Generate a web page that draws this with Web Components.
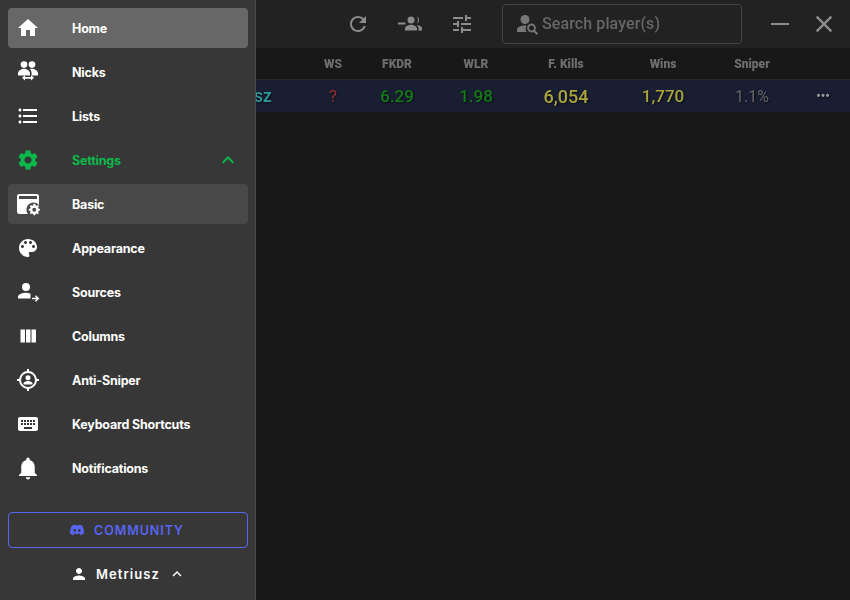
<!DOCTYPE html>
<html>
<head>
<meta charset="utf-8">
<style>
  html, body { margin: 0; height: 100%; background: #181818; overflow: hidden; }
</style>
</head>
<body>
<app-shell>
  <player-view slot="view"></player-view>
  <side-drawer slot="drawer"></side-drawer>
</app-shell>

<script>
const PATHS = {
  home: `<path d="M10 20v-6h4v6h5v-8h3L12 3 2 12h3v8z"/>`,
  nicks: `<circle cx="8" cy="4.600" r="3.300"/><circle cx="16" cy="4.600" r="3.300"/><path d="M2 15.400v-2c0-2.600 3.600-4.600 6-4.600s6 2 6 4.600v2zM15.600 15.400v-2.200c0-1.700-.7-3-1.900-4.100.7-.2 1.600-.3 2.300-.3 2.400 0 6 1.900 6 4.400v2.200z"/><path d="M9 19v-2l-3 3 3 3v-2h6v2l3-3-3-3v2z" transform="translate(0 -.2) scale(1 .9)"/>`,
  list: `<path d="M4 10.500c-.83 0-1.500.67-1.500 1.500s.67 1.500 1.500 1.500 1.500-.67 1.500-1.500-.67-1.500-1.500-1.500zm0-6c-.83 0-1.500.67-1.500 1.500S3.170 7.500 4 7.500 5.500 6.830 5.500 6 4.830 4.500 4 4.500zm0 12c-.83 0-1.500.68-1.500 1.500s.68 1.500 1.500 1.500 1.500-.68 1.500-1.500-.67-1.500-1.500-1.500zM7 19h14v-2H7v2zm0-6h14v-2H7v2zm0-8v2h14V5H7z"/>`,
  settings: `<path d="M19.140 12.940c.04-.3.06-.61.06-.94 0-.32-.02-.64-.07-.94l2.030-1.580c.18-.14.23-.41.12-.61l-1.920-3.320c-.12-.22-.37-.29-.59-.22l-2.390.96c-.5-.38-1.030-.7-1.620-.94l-.36-2.540c-.04-.24-.24-.41-.48-.41h-3.840c-.24 0-.43.17-.47.41l-.36 2.540c-.59.24-1.130.57-1.620.94l-2.390-.96c-.22-.08-.47 0-.59.22L2.740 8.870c-.12.21-.08.47.12.61l2.030 1.580c-.05.3-.09.63-.09.94s.02.64.07.94l-2.030 1.580c-.18.14-.23.41-.12.61l1.920 3.320c.12.22.37.29.59.22l2.390-.96c.5.38 1.030.7 1.620.94l.36 2.540c.05.24.24.41.48.41h3.840c.24 0 .44-.17.47-.41l.36-2.540c.59-.24 1.130-.56 1.620-.94l2.390.96c.22.08.47 0 .59-.22l1.920-3.320c.12-.22.07-.47-.12-.61l-2.010-1.580zM12 15.600c-1.980 0-3.600-1.620-3.600-3.600s1.620-3.600 3.600-3.600 3.600 1.620 3.600 3.600-1.620 3.600-3.600 3.600z"/>`,
  basic: `<path fill-rule="evenodd" d="M3.200 2h17.600A2.200 2.200 0 0 1 23 4.200V13a7 7 0 0 0-11 9H3.200A2.200 2.200 0 0 1 1 19.800V4.200A2.200 2.200 0 0 1 3.200 2zM3 4v3h18V4z"/><path fill-rule="evenodd" d="M18 13.500l1 .1.4 1.500 1 .5 1.400-.7 1 1.100-.8 1.300.3 1 1.500.5v1.500l-1.500.5-.3 1-.1 0 .8 1.300-1 1-1.400-.7-1 .5-.4 1.300h-1.600l-.4-1.300-1-.5-1.400.7-1-1 .8-1.300-.4-1-1.500-.5v-1.500l1.500-.5.4-1 -.8-1.300 1-1.100 1.400.7 1-.5.4-1.500zM18 17.700a2 2 0 1 0 0 4 2 2 0 0 0 0-4z" transform="translate(.6 -1.500) scale(.98)"/>`,
  palette: `<path d="M12 3c-4.970 0-9 4.030-9 9s4.030 9 9 9c.83 0 1.500-.67 1.500-1.500 0-.39-.15-.74-.39-1.010-.23-.26-.38-.61-.38-.99 0-.83.67-1.500 1.500-1.500H16c2.760 0 5-2.240 5-5 0-4.420-4.030-8-9-8zm-5.500 9c-.83 0-1.500-.67-1.500-1.500S5.670 9 6.500 9 8 9.670 8 10.500 7.330 12 6.500 12zm3-4C8.670 8 8 7.330 8 6.500S8.670 5 9.500 5s1.500.67 1.500 1.500S10.330 8 9.500 8zm5 0c-.83 0-1.500-.67-1.500-1.500S13.670 5 14.500 5s1.500.67 1.500 1.500S15.330 8 14.500 8zm3 4c-.83 0-1.500-.67-1.500-1.500S16.670 9 17.500 9s1.500.67 1.500 1.500-.67 1.500-1.500 1.500z"/>`,
  sources: `<circle cx="10" cy="7" r="4"/><path d="M2 18.500v-1.700c0-2.700 5.300-4 8-4 1.300 0 3 .3 4.500.9v4.800z"/><path d="M16 19.200h4.600l-1.700-1.700 1-1 3.500 3.500-3.500 3.500-1-1 1.700-1.700H16z" transform="translate(0 -.5) scale(1 .95)"/>`,
  columns: `<path d="M10 18.500h4.500V5.500H10zm-5.500 0H9V5.500H4.500zM15.500 5.500v13H20v-13z"/>`,
  sniper: `<path fill-rule="evenodd" d="M13 1v2.070A9 9 0 0 1 20.930 11H23v2h-2.070A9 9 0 0 1 13 20.930V23h-2v-2.070A9 9 0 0 1 3.070 13H1v-2h2.070A9 9 0 0 1 11 3.070V1zM12 5a7 7 0 1 0 0 14 7 7 0 0 0 0-14z"/><circle cx="12" cy="9.800" r="2.500"/><path d="M7.500 16.500v-.9c0-1.900 3-2.700 4.500-2.700s4.500.8 4.500 2.700v.9z"/>`,
  keyboard: `<path d="M20 5H4c-1.100 0-1.990.9-1.990 2L2 17c0 1.100.9 2 2 2h16c1.100 0 2-.9 2-2V7c0-1.100-.9-2-2-2zm-9 3h2v2h-2V8zm0 3h2v2h-2v-2zM8 8h2v2H8V8zm0 3h2v2H8v-2zm-1 2H5v-2h2v2zm0-3H5V8h2v2zm9 7H8v-2h8v2zm0-4h-2v-2h2v2zm0-3h-2V8h2v2zm3 3h-2v-2h2v2zm0-3h-2V8h2v2z"/>`,
  bell: `<path transform="translate(-1.500 -1.300) scale(1.125)" d="M12 22c1.100 0 2-.9 2-2h-4c0 1.100.89 2 2 2zm6-6v-5c0-3.070-1.640-5.640-4.500-6.320V4c0-.83-.67-1.500-1.500-1.500s-1.500.67-1.500 1.500v.68C7.630 5.360 6 7.920 6 11v5l-2 2v1h16v-1l-2-2z"/>`,
  less: `<path d="M12 8l-6 6 1.410 1.410L12 10.830l4.590 4.580L18 14z"/>`,
  person: `<path d="M12 12c2.210 0 4-1.790 4-4s-1.790-4-4-4-4 1.790-4 4 1.790 4 4 4zm0 2c-2.670 0-8 1.340-8 4v2h16v-2c0-2.660-5.330-4-8-4z"/>`,
  discord: `<path d="M20.317 4.370a19.791 19.791 0 0 0-4.885-1.515.074.074 0 0 0-.079.037c-.21.375-.444.864-.608 1.250a18.270 18.270 0 0 0-5.487 0 12.640 12.640 0 0 0-.617-1.250.077.077 0 0 0-.079-.037A19.736 19.736 0 0 0 3.677 4.370a.07.07 0 0 0-.032.027C.533 9.046-.32 13.580.099 18.057a.082.082 0 0 0 .031.057 19.900 19.900 0 0 0 5.993 3.030.078.078 0 0 0 .084-.028 14.090 14.090 0 0 0 1.226-1.994.076.076 0 0 0-.041-.106 13.107 13.107 0 0 1-1.872-.892.077.077 0 0 1-.008-.128 10.200 10.200 0 0 0 .372-.292.074.074 0 0 1 .077-.01c3.928 1.793 8.180 1.793 12.062 0a.074.074 0 0 1 .078.01c.12.098.246.198.373.292a.077.077 0 0 1-.006.127 12.299 12.299 0 0 1-1.873.892.077.077 0 0 0-.041.107c.36.698.772 1.362 1.225 1.993a.076.076 0 0 0 .084.028 19.839 19.839 0 0 0 6.002-3.030.077.077 0 0 0 .032-.054c.5-5.177-.838-9.674-3.549-13.660a.061.061 0 0 0-.031-.03zM8.020 15.330c-1.183 0-2.157-1.085-2.157-2.419 0-1.333.956-2.419 2.157-2.419 1.210 0 2.176 1.096 2.157 2.420 0 1.333-.956 2.418-2.157 2.418zm7.975 0c-1.183 0-2.157-1.085-2.157-2.419 0-1.333.955-2.419 2.157-2.419 1.210 0 2.176 1.096 2.157 2.420 0 1.333-.946 2.418-2.157 2.418z"/>`,
  refresh: `<path d="M17.650 6.350C16.200 4.900 14.210 4 12 4c-4.420 0-7.990 3.580-7.990 8s3.570 8 7.990 8c3.730 0 6.840-2.550 7.730-6h-2.080c-.82 2.330-3.040 4-5.650 4-3.310 0-6-2.690-6-6s2.690-6 6-6c1.660 0 3.140.69 4.220 1.780L13 11h7V4l-2.350 2.350z"/>`,
  groupRemove: `<path d="M0 10.500h7.500v2H0z"/><circle cx="13" cy="8" r="3.500"/><path d="M18.500 4.600a3.500 3.500 0 0 1 0 6.800 5 5 0 0 0 0-6.800z"/><path d="M7 18.500v-2c0-2.400 3.800-3.800 6-3.800s6 1.400 6 3.800v2zM20.500 18.500v-2.300c0-1.300-.6-2.500-1.800-3.300 2.200.2 5.300 1.400 5.300 3.400v2.200z"/>`,
  tune: `<path d="M3 17v2h6v-2H3zM3 5v2h10V5H3zm10 16v-2h8v-2h-8v-2h-2v6h2zM7 9v2H3v2h4v2h2V9H7zm14 4v-2H11v2h10zm-6-4h2V7h4V5h-4V3h-2v6z"/>`,
  searchPlayer: `<circle cx="10" cy="7.500" r="4.500"/><path d="M2 20v-2.200c0-3 5-4.300 8-4.300.6 0 1.200 0 1.800.1A6 6 0 0 0 11.500 20z"/><path fill-rule="evenodd" d="M16.500 11.500a4.500 4.500 0 0 1 3.700 7l3 3-1.500 1.500-3-3a4.500 4.500 0 1 1-2.200-8.500zm0 2a2.500 2.500 0 1 0 0 5 2.500 2.500 0 0 0 0-5z"/>`,
  minimize: `<path d="M3 11h18v2H3z"/>`,
  close: `<path d="M19 6.410 17.590 5 12 10.590 6.410 5 5 6.410 10.590 12 5 17.590 6.410 19 12 13.410 17.590 19 19 17.590 13.410 12z"/>`
};

class UiIcon extends HTMLElement {
  connectedCallback() {
    const size = this.getAttribute("size") || 24;
    this.attachShadow({ mode: "open" }).innerHTML = `
      <style>
        :host { display: block; width: ${size}px; height: ${size}px; flex: none; }
        svg { display: block; width: 100%; height: 100%; fill: currentColor; overflow: visible; }
      </style>
      <svg viewBox="0 0 24 24">${PATHS[this.getAttribute("name")] || ""}</svg>
    `;
  }
}
customElements.define("ui-icon", UiIcon);

class AppShell extends HTMLElement {
  constructor() {
    super();
    this.attachShadow({ mode: "open" }).innerHTML = `
      <style>
        :host { display: block; position: relative; width: 850px; height: 600px; overflow: hidden; }
        .drawer { position: absolute; left: 0; top: 0; bottom: 0; }
      </style>
      <slot name="view"></slot>
      <div class="drawer"><slot name="drawer"></slot></div>
    `;
  }
}
customElements.define("app-shell", AppShell);

class NavItem extends HTMLElement {
  connectedCallback() {
    const active = this.hasAttribute("expanded");
    this.attachShadow({ mode: "open" }).innerHTML = `
      <style>
        :host { display: flex; align-items: center; height: 40px; padding: 0 8px; gap: 32px; border-radius: 4px; color: #fff; }
        :host([tone="selected"]) { background: #676767; }
        :host([tone="sub"]) { background: #484848; }
        :host([tone="green"]) { color: #0bb84a; }
        .label { flex: 1; padding-top: 2px; font: 650 12.5px/1 Inter, "Liberation Sans", sans-serif; letter-spacing: -.2px; }
      </style>
      <ui-icon name="${this.getAttribute("icon")}"></ui-icon>
      <span class="label">${this.getAttribute("label")}</span>
      ${active ? `<ui-icon name="less"></ui-icon>` : ""}
    `;
  }
}
customElements.define("nav-item", NavItem);

class SideDrawer extends HTMLElement {
  constructor() {
    super();
    const items = [
      ["home", "Home", "selected"],
      ["nicks", "Nicks"],
      ["list", "Lists"],
      ["settings", "Settings", "green", true],
      ["basic", "Basic", "sub"],
      ["palette", "Appearance"],
      ["sources", "Sources"],
      ["columns", "Columns"],
      ["sniper", "Anti-Sniper"],
      ["keyboard", "Keyboard Shortcuts"],
      ["bell", "Notifications"]
    ];
    this.attachShadow({ mode: "open" }).innerHTML = `
      <style>
        :host { display: flex; flex-direction: column; box-sizing: border-box; width: 256px; height: 600px; padding: 8px 7px 0 8px; background: #373737; border-right: 1px solid #4a4a4a; }
        nav { display: flex; flex-direction: column; gap: 4px; flex: 1; }
        .community { box-sizing: border-box; height: 36px; padding-right: 2px; display: flex; align-items: center; justify-content: center; gap: 10px; border: 1px solid #5865f2; border-radius: 4px; color: #5865f2; font: 600 12.5px/1 Inter, "Liberation Sans", sans-serif; letter-spacing: .95px; }
        .community span { padding-top: 2px; }
        .user { height: 52px; display: flex; align-items: center; justify-content: center; color: #fff; font: 600 13px/1 Inter, "Liberation Sans", sans-serif; letter-spacing: 1.05px; }
        .user span { margin: 0 8px; }
      </style>
      <nav>
        ${items.map(([icon, label, tone, expanded]) => `
          <nav-item icon="${icon}" label="${label}" ${tone ? `tone="${tone}"` : ""} ${expanded ? "expanded" : ""}></nav-item>
        `).join("")}
      </nav>
      <div class="community"><ui-icon name="discord" size="14"></ui-icon><span>COMMUNITY</span></div>
      <div class="user"><ui-icon name="person" size="18"></ui-icon><span>Metriusz</span><ui-icon name="less" size="18"></ui-icon></div>
    `;
  }
}
customElements.define("side-drawer", SideDrawer);

class TopBar extends HTMLElement {
  constructor() {
    super();
    this.attachShadow({ mode: "open" }).innerHTML = `
      <style>
        :host { display: flex; align-items: center; height: 48px; padding-left: 346px; background: #222; color: #8c8c8c; box-sizing: border-box; }
        ui-icon + ui-icon { margin-left: 28px; }
        .search { box-sizing: border-box; width: 240px; height: 40px; margin: 0 26px 0 28px; padding-left: 12px; display: flex; align-items: center; gap: 3px; border: 1px solid #444; border-radius: 4px; color: #666; font: 500 16px/1 Roboto, sans-serif; letter-spacing: .1px; }
        .search ui-icon { color: #777; }
        .close { margin-left: 18px; }
      </style>
      <ui-icon name="refresh"></ui-icon>
      <ui-icon name="groupRemove"></ui-icon>
      <ui-icon name="tune"></ui-icon>
      <div class="search"><ui-icon name="searchPlayer"></ui-icon>Search player(s)</div>
      <ui-icon name="minimize"></ui-icon>
      <ui-icon class="close" name="close" size="28"></ui-icon>
    `;
  }
}
customElements.define("top-bar", TopBar);

const COLS = "310px 46px 82px 76px 104px 90px 88px 54px";

class StatTable extends HTMLElement {
  constructor() {
    super();
    const heads = ["", "WS", "FKDR", "WLR", "F. Kills", "Wins", "Sniper", ""];
    this.attachShadow({ mode: "open" }).innerHTML = `
      <style>
        :host { display: block; font-family: Roboto, sans-serif; }
        .head, .row { display: grid; grid-template-columns: ${COLS}; align-items: center; text-align: center; }
        .head { height: 31px; border-bottom: 1px solid #262626; color: #6e6e6e; font-size: 12px; font-weight: 900; }
        .row { height: 32px; background: #1a1e33; font-size: 17px; text-shadow: 1px 1px 2px rgba(0,0,0,.6); }
        .name { text-align: left; padding-left: 203px; color: #2e9a9e; font-weight: 500; font-size: 17.5px; }
        .green { color: #147c14; font-weight: 500; }
        .gold { color: #a8a53c; font-weight: 500; }
        .dots { color: #999; font-size: 12px; font-weight: 900; letter-spacing: 0; }
      </style>
      <div class="head">${heads.map(h => `<span>${h}</span>`).join("")}</div>
      <div class="row">
        <span class="name">Metriusz</span>
        <span style="color:#9c2f2f">?</span>
        <span class="green">6.29</span>
        <span class="green">1.98</span>
        <span class="gold" style="font-size:18px">6,054</span>
        <span class="gold">1,770</span>
        <span style="color:#666;font-size:16px">1.1%</span>
        <span class="dots">•••</span>
      </div>
    `;
  }
}
customElements.define("stat-table", StatTable);

class PlayerView extends HTMLElement {
  constructor() {
    super();
    this.attachShadow({ mode: "open" }).innerHTML = `
      <style>
        :host { display: block; height: 600px; background: #181818; filter: blur(.4px); }
      </style>
      <top-bar></top-bar>
      <stat-table></stat-table>
    `;
  }
}
customElements.define("player-view", PlayerView);
</script>
</body>
</html>
